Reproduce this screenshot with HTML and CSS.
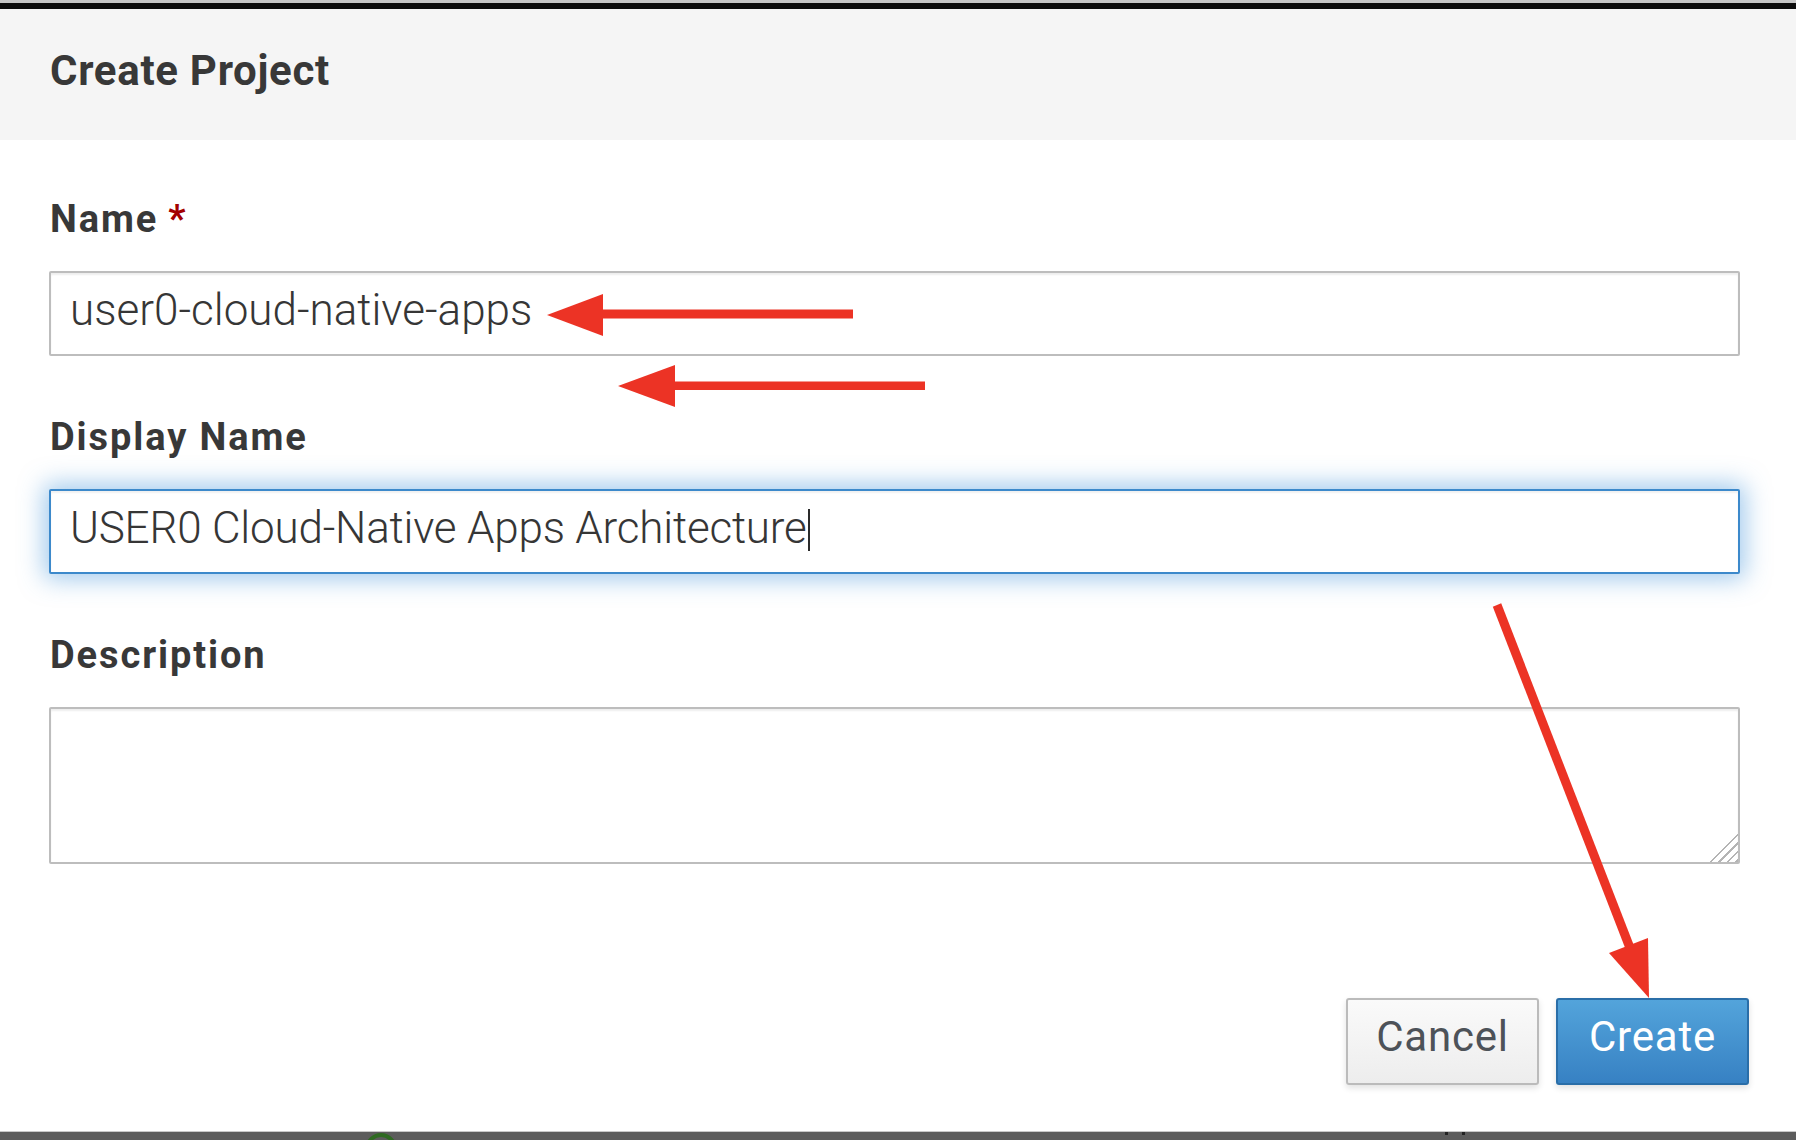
FILE: index.html
```html
<!DOCTYPE html>
<html lang="en">
<head>
<meta charset="utf-8">
<title>Create Project</title>
<link rel="stylesheet" href="styles.css">
</head>
<body>
<div class="page">
  <header class="modal-header">
    <h1 class="modal-title">Create Project</h1>
  </header>
  <main class="modal-body">
    <div class="field">
      <label class="field-label" for="name">Name<span class="required">*</span></label>
      <input class="text-input" id="name" type="text" value="user0-cloud-native-apps">
    </div>
    <div class="field">
      <label class="field-label">Display Name</label>
      <div class="text-input focused" role="textbox">USER0 Cloud-Native Apps Architecture<span class="caret"></span></div>
    </div>
    <div class="field">
      <label class="field-label" for="desc">Description</label>
      <div class="area-wrap">
        <textarea class="text-area" id="desc"></textarea>
        <span class="grip"></span>
      </div>
    </div>
  </main>
  <footer class="modal-footer">
    <button class="btn btn-default" type="button">Cancel</button>
    <button class="btn btn-primary" type="button">Create</button>
  </footer>
  <div class="bottom-bar"><span class="peek-ring"></span><span class="peek-mark"></span></div>
  <svg class="annotations" width="1796" height="1140" viewBox="0 0 1796 1140">
    <g fill="#ec3325">
      <rect x="600" y="309.5" width="253" height="9"></rect>
      <polygon points="547,315 603,294 603,336"></polygon>
      <rect x="672" y="381.5" width="253" height="8.5"></rect>
      <polygon points="618,386 675,365 675,407"></polygon>
      <polygon points="1649,998 1648,938 1609,953"></polygon>
    </g>
    <line x1="1497" y1="605" x2="1630" y2="948" stroke="#ec3325" stroke-width="9"></line>
  </svg>
</div>
</body>
</html>
```
FILE: styles.css
```css
html, body {
  margin: 0;
  padding: 0;
  background: #ffffff;
}
body {
  font-family: Roboto, "Liberation Sans", Arial, sans-serif;
  color: #363636;
  width: 1796px;
  height: 1140px;
  overflow: hidden;
}
.page {
  position: relative;
  width: 1796px;
  height: 1140px;
  display: flex;
  flex-direction: column;
}
.modal-header {
  border-top: 3px solid #c6c6c6;
  box-shadow: inset 0 6px 0 #0c0c0c;
  background: #f5f5f5;
  height: 131px;
  box-sizing: content-box;
  padding: 6px 49px 0 49px;
  margin: 0;
}
.modal-title {
  margin: 41px 0 0 1px;
  font-size: 42px;
  line-height: 42px;
  font-weight: 700;
  letter-spacing: 0.7px;
  color: #383838;
}
.modal-body {
  padding: 0 56px 0 49px;
  display: flex;
  flex-direction: column;
}
.field {
  display: flex;
  flex-direction: column;
  margin-top: 62px;
}
.field:first-child {
  margin-top: 60px;
}
.field-label {
  display: block;
  font-size: 38px;
  line-height: 38px;
  font-weight: 700;
  letter-spacing: 1.9px;
  color: #383838;
  margin-left: 1px;
}
.required {
  color: #a30000;
  margin-left: 10px;
}
.text-input {
  margin-top: 33px;
  box-sizing: border-box;
  height: 85px;
  width: 100%;
  border: 2px solid #bdbdbd;
  border-radius: 2px;
  padding: 0 19px 7px 19px;
  font-family: Roboto, "Liberation Sans", Arial, sans-serif;
  font-size: 44px;
  font-weight: 300;
  color: #363636;
  background: #ffffff;
  box-shadow: inset 0 2px 2px rgba(0, 0, 0, 0.07);
  outline: none;
}
.text-input.focused {
  display: flex;
  align-items: center;
  line-height: normal;
  letter-spacing: -0.2px;
  border-color: #3c89cb;
  box-shadow: inset 0 2px 2px rgba(0, 0, 0, 0.06), 0 0 24px 5px rgba(70, 150, 220, 0.5);
  white-space: nowrap;
}
.caret {
  display: inline-block;
  width: 2px;
  height: 42px;
  background: #2b2b2b;
  margin-left: 1px;
  align-self: center;
  position: relative;
  top: 2px;
}
.area-wrap {
  position: relative;
  margin-top: 33px;
  height: 157px;
}
.text-area {
  display: block;
  box-sizing: border-box;
  height: 157px;
  width: 100%;
  margin: 0;
  border: 2px solid #bdbdbd;
  border-radius: 2px;
  box-shadow: inset 0 2px 2px rgba(0, 0, 0, 0.07);
  font-family: Roboto, "Liberation Sans", Arial, sans-serif;
  font-size: 44px;
  resize: none;
  outline: none;
  background: #ffffff;
}
.grip {
  position: absolute;
  right: 2px;
  bottom: 2px;
  width: 30px;
  height: 30px;
  background: repeating-linear-gradient(135deg, transparent 0 4px, #b4b4b4 4px 6px);
  clip-path: polygon(100% 0, 100% 100%, 0 100%);
}
.modal-footer {
  margin-top: 134px;
  padding-right: 47px;
  display: flex;
  justify-content: flex-end;
  gap: 17px;
}
.btn {
  box-sizing: border-box;
  width: 193px;
  height: 87px;
  border-radius: 3px;
  font-family: Roboto, "Liberation Sans", Arial, sans-serif;
  font-size: 42px;
  line-height: 42px;
  font-weight: 400;
  letter-spacing: 0.8px;
  padding: 16px 0 25px 0;
  cursor: pointer;
  box-shadow: 0 3px 6px rgba(0, 0, 0, 0.12);
}
.btn-default {
  border: 2px solid #bbbbbb;
  background: linear-gradient(#fafafa, #ededed);
  color: #4d5258;
}
.btn-primary {
  border: 2px solid #2a6ea8;
  background: linear-gradient(#53a4db, #3781c3);
  color: #ffffff;
}
.bottom-bar {
  position: relative;
  margin-top: 46px;
  height: 9px;
  border-top: 1px solid #c8c8c8;
  box-sizing: border-box;
  background: #5c5c5c;
}
.peek-ring {
  position: absolute;
  left: 365px;
  top: 1px;
  width: 24px;
  height: 24px;
  border: 4px solid #2f6a22;
  border-radius: 50%;
}
.peek-mark {
  position: absolute;
  left: 1445px;
  top: 0;
  width: 14px;
  height: 3px;
  border-left: 3px solid #222;
  border-right: 3px solid #222;
}
.annotations {
  position: absolute;
  left: 0;
  top: 0;
  pointer-events: none;
}
```
